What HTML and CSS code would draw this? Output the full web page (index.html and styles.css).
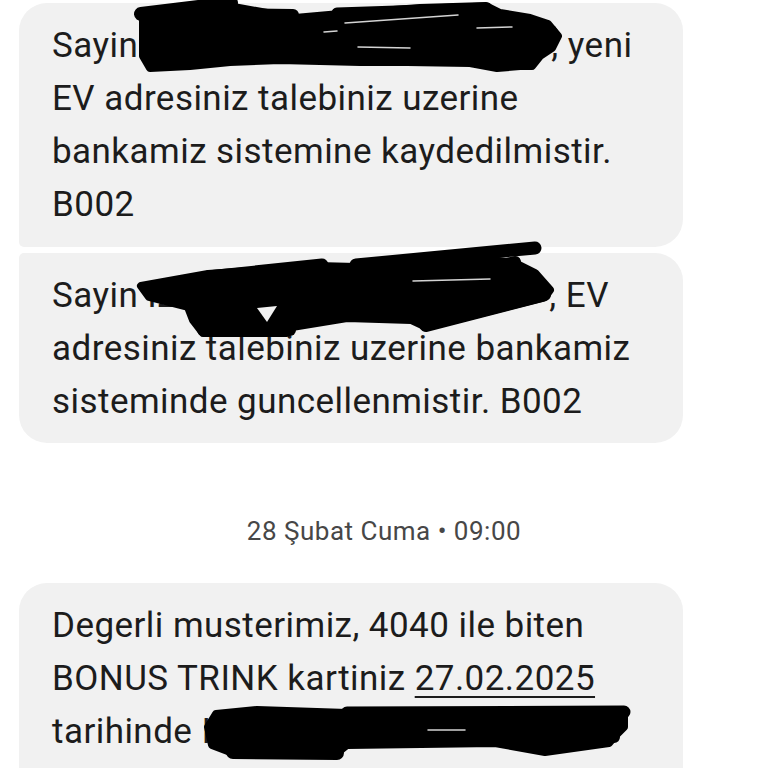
FILE: index.html
```html
<!DOCTYPE html>
<html lang="tr">
<head>
<meta charset="utf-8">
<title>Mesajlar</title>
<link rel="stylesheet" href="styles.css">
</head>
<body>
<div class="screen">
  <div class="thread">
    <div class="bubble first">
      <p class="msg">Sayin <span class="redact r1"></span>, yeni<br>EV adresiniz talebiniz uzerine<br>bankamiz sistemine kaydedilmistir.<br>B002</p>
    </div>
    <div class="bubble last">
      <p class="msg">Sayin <span class="redact r2">IZ</span>, EV<br>adresiniz talebiniz uzerine bankamiz<br>sisteminde guncellenmistir. B002</p>
    </div>
    <div class="stamp">28 Şubat Cuma • 09:00</div>
    <div class="bubble single">
      <p class="msg">Degerli musterimiz, 4040 ile biten<br>BONUS TRINK kartiniz <span class="date">27.02.2025</span><br>tarihinde <span class="redact r3">I</span></p>
    </div>
  </div>

  <svg class="scribbles" viewBox="0 0 768 768" width="768" height="768" aria-hidden="true">
    <g fill="#000" stroke="#000" stroke-linejoin="round" stroke-linecap="round">
      <!-- bubble 1 -->
      <polygon stroke-width="8" points="143,16 228,6 295,18 340,14 420,8 486,6 500,13 530,18 548,24 558,36 552,48 540,56 532,66 520,66 497,68 470,63 407,62 360,62 280,60 230,62 190,66 150,68 143,56"/>
      <line stroke-width="14" x1="141" y1="14" x2="231" y2="3"/>
      <line stroke-width="12" x1="220" y1="14" x2="293" y2="15"/>
      <line stroke-width="11" x1="337" y1="13" x2="487" y2="8"/>
      <line stroke-width="12" x1="473" y1="20" x2="530" y2="23"/>
      <circle stroke-width="0" cx="549" cy="33" r="9"/>
      <!-- bubble 2 -->
      <polygon stroke-width="8" points="141,286 208,274 317,266 356,267 411,263 475,259 515,263 535,273 550,290 545,297 426,327 411,320 347,318 292,327 287,333 203,333 193,320 188,307 149,297"/>
      <line stroke-width="13" x1="356" y1="265" x2="535" y2="248"/>
      <line stroke-width="13" x1="208" y1="277" x2="322" y2="265"/>
      <line stroke-width="14" x1="426" y1="325" x2="542" y2="295"/>
      <polyline fill="none" stroke-width="12" points="515,262 475,272 527,278 545,295"/>
      <line stroke-width="12" x1="203" y1="330" x2="290" y2="330"/>
      <!-- bubble 3 -->
      <polygon stroke-width="8" points="208,727 216,714 257,710 347,713 480,712 624,712 624,727 614,737 609,743 545,752 495,743 347,745 337,753 233,753 212,745"/>
      <line stroke-width="13" x1="347" y1="713" x2="624" y2="712"/>
      <line stroke-width="12" x1="495" y1="740" x2="614" y2="737"/>
      <line stroke-width="14" x1="233" y1="752" x2="337" y2="753"/>
    </g>
    <g stroke="#d4d4d4" stroke-linecap="round" fill="none" stroke-width="1.5">
      <line x1="358" y1="47" x2="410" y2="48"/>
      <line x1="477" y1="28" x2="512" y2="27"/>
      <line x1="324" y1="32" x2="337" y2="31"/>
      <line x1="345" y1="23" x2="458" y2="15"/>
      <line x1="413" y1="281" x2="490" y2="279"/>
      <line x1="428" y1="730" x2="465" y2="730"/>
    </g>
    <polygon fill="#f1f1f1" points="257,308 277,306 267,322"/>
  </svg>
</div>
</body>
</html>
```

FILE: styles.css
```css
html, body {
  margin: 0;
  padding: 0;
  background: #ffffff;
}

.screen {
  position: relative;
  width: 768px;
  height: 768px;
  overflow: hidden;
  font-family: Roboto, "Noto Sans", "Liberation Sans", sans-serif;
}

.thread {
  display: flex;
  flex-direction: column;
  padding: 3px 0 0 19px;
}

.bubble {
  width: 664px;
  box-sizing: border-box;
  background: #f1f1f1;
  padding: 16px 33px 15px;
  border-radius: 28px;
}

.bubble.first {
  border-radius: 28px 28px 28px 5px;
  padding-bottom: 16px;
}

.bubble.last {
  margin-top: 6px;
  border-radius: 5px 28px 28px 28px;
}

.bubble.single {
  margin-top: 37px;
  padding-bottom: 40px;
}

.msg {
  margin: 0;
  font-size: 35px;
  letter-spacing: 0.45px;
  line-height: 53px;
  color: #1c1c1c;
  white-space: nowrap;
}

.redact {
  display: inline-block;
  vertical-align: baseline;
}

.r1 { width: 404px; }
.r2 { width: 402px; }
.r3 { width: 200px; }

.date {
  text-decoration: underline;
  text-decoration-thickness: 2px;
  text-underline-offset: 6px;
}

.stamp {
  margin: 73px 0 0 -19px;
  width: 768px;
  text-align: center;
  font-size: 26px;
  letter-spacing: 0.5px;
  line-height: 30px;
  color: #474747;
}

.scribbles {
  position: absolute;
  left: 0;
  top: 0;
  pointer-events: none;
}
```
